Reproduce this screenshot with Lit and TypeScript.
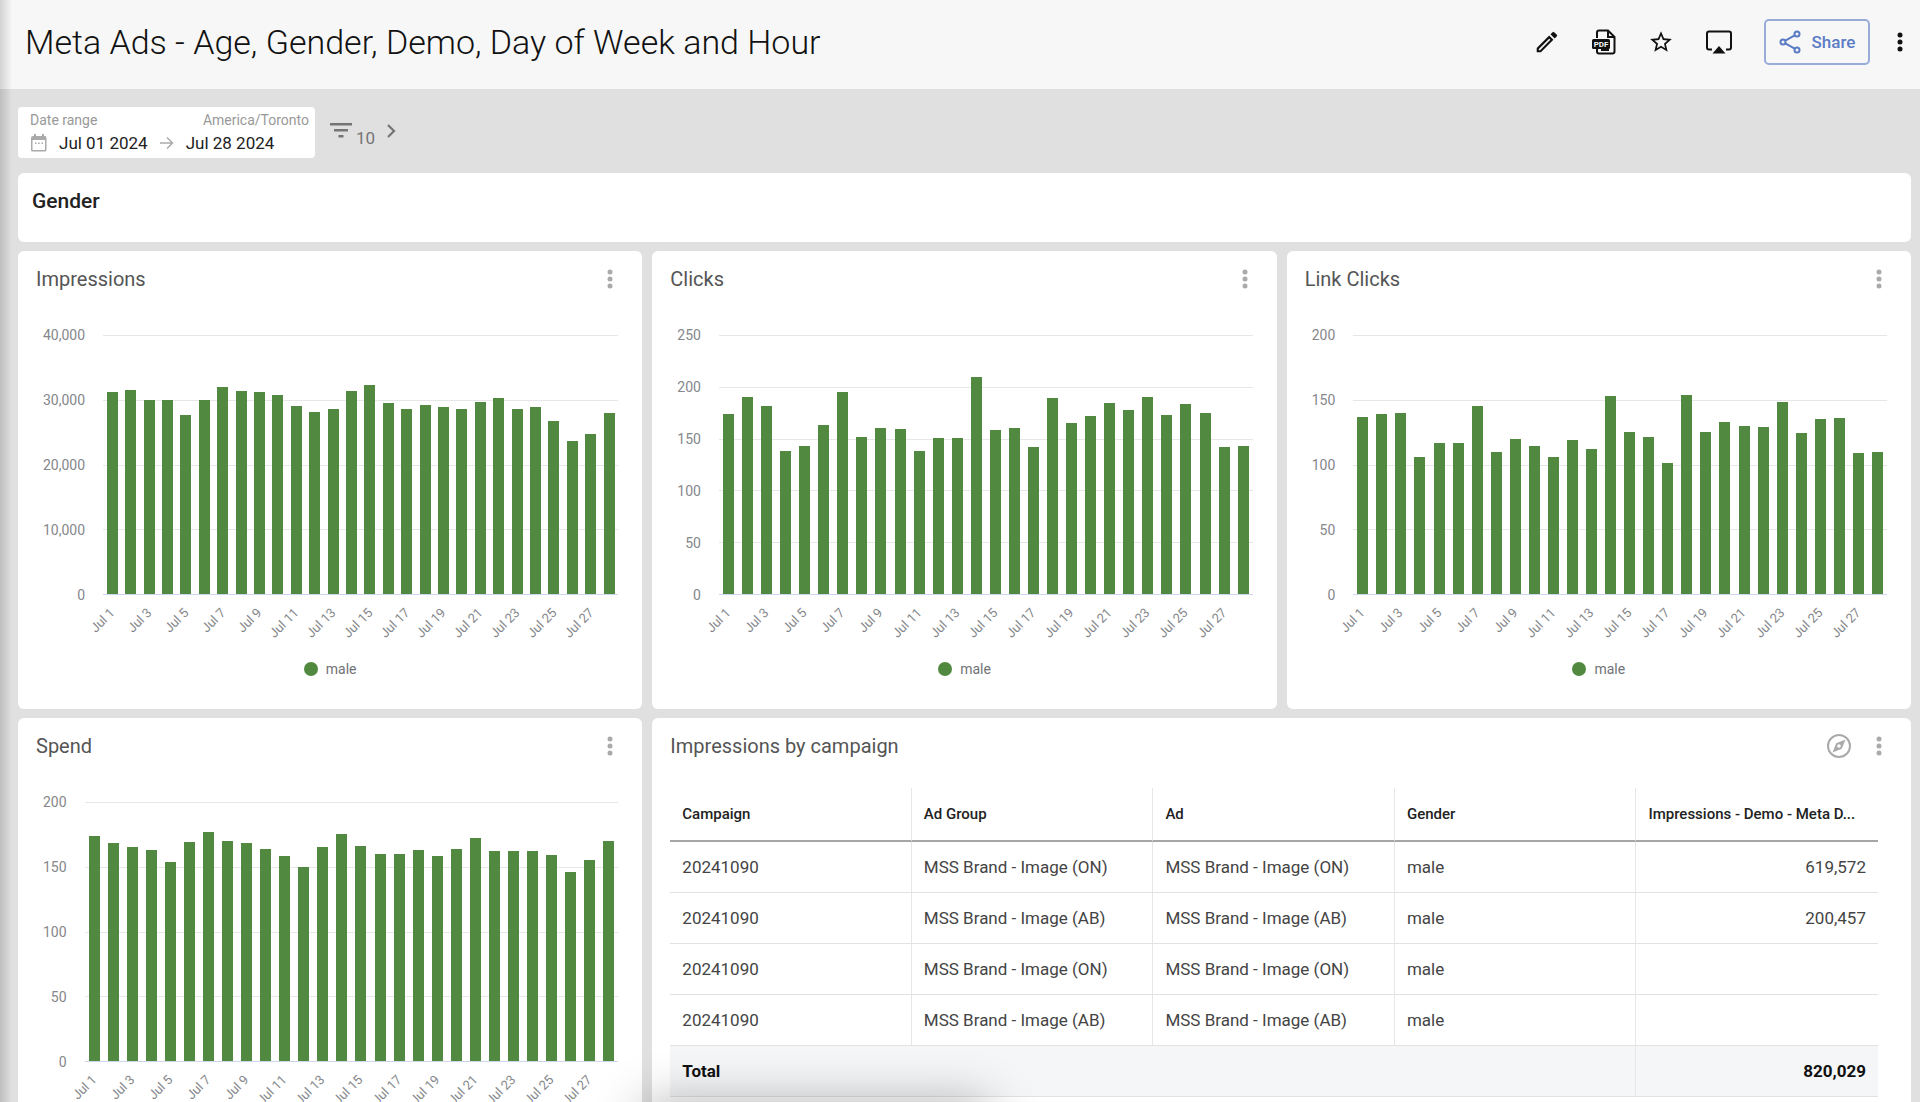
import { LitElement, html, css } from "lit";
import { customElement, property } from "lit/decorators.js";

const kebab = html`<svg class="kebab" viewBox="0 0 6 20" width="6" height="20" aria-hidden="true">
  <circle cx="3" cy="3" r="2.5" /><circle cx="3" cy="10" r="2.5" /><circle cx="3" cy="17" r="2.5" />
</svg>`;

interface Series {
  title: string;
  ticks: number[];
  values: number[];
}

const impressions: Series = {
  title: "Impressions",
  ticks: [40000, 30000, 20000, 10000, 0],
  values: [
    31170, 31520, 29890, 29890, 27720, 30040, 31950, 31330, 31170, 30810, 28960, 28080, 28600, 31330,
    32310, 29530, 28600, 29170, 28810, 28600, 29730, 30250, 28600, 28810, 26750, 23660, 24790, 27880,
  ],
};

const clicks: Series = {
  title: "Clicks",
  ticks: [250, 200, 150, 100, 50, 0],
  values: [
    174, 190, 181, 138, 143, 163, 195, 152, 160, 159, 138, 151, 151, 209,
    158, 160, 142, 189, 165, 172, 184, 178, 190, 173, 183, 175, 142, 143,
  ],
};

const linkClicks: Series = {
  title: "Link Clicks",
  ticks: [200, 150, 100, 50, 0],
  values: [
    137, 139, 140, 106, 117, 117, 145, 110, 120, 114, 106, 119, 112, 153,
    125, 121, 101, 154, 125, 133, 130, 129, 148, 124, 135, 136, 109, 110,
  ],
};

const spend: Series = {
  title: "Spend",
  ticks: [200, 150, 100, 50, 0],
  values: [
    174, 168, 165, 163, 154, 169, 177, 170, 168, 164, 158, 150, 165, 175,
    166, 160, 160, 163, 158, 164, 172, 162, 162, 162, 159, 146, 155, 170,
  ],
};

const campaigns = [
  ["20241090", "MSS Brand - Image (ON)", "MSS Brand - Image (ON)", "male", "619,572"],
  ["20241090", "MSS Brand - Image (AB)", "MSS Brand - Image (AB)", "male", "200,457"],
  ["20241090", "MSS Brand - Image (ON)", "MSS Brand - Image (ON)", "male", ""],
  ["20241090", "MSS Brand - Image (AB)", "MSS Brand - Image (AB)", "male", ""],
];

const base = css`
  * {
    box-sizing: border-box;
  }
  button {
    display: flex;
    align-items: center;
    justify-content: center;
    margin: 0;
    padding: 0;
    border: 0;
    background: none;
    color: inherit;
    font: inherit;
    cursor: pointer;
  }
  svg {
    display: block;
    fill: currentColor;
  }
`;

const cardStyles = css`
  :host {
    display: block;
    background: #fff;
    border-radius: 6px;
  }
  .head {
    display: flex;
    align-items: center;
    gap: 25px;
    height: 55px;
    padding: 0 29px 0 18px;
  }
  h2 {
    flex: 1;
    margin: 0;
    color: #555;
    font-size: 20px;
    font-weight: 400;
    line-height: 24px;
  }
  .head button {
    color: #aaa;
  }
`;

@customElement("bar-chart")
export class BarChart extends LitElement {
  @property({ attribute: false }) series!: Series;

  static styles = [
    base,
    cardStyles,
    css`
      :host {
        height: 458px;
      }
      .chart {
        display: grid;
        grid-template-columns: auto 1fr;
        column-gap: 18px;
        padding: 29px 24px 0 25px;
      }
      .axis {
        display: flex;
        flex-direction: column;
        justify-content: space-between;
        height: 260px;
        color: #85878b;
        font-size: 14px;
        text-align: right;
      }
      .axis span {
        display: flex;
        align-items: center;
        justify-content: flex-end;
        height: 0;
      }
      .plot {
        display: grid;
        height: 260px;
      }
      .lines,
      .bars {
        grid-area: 1 / 1;
      }
      .lines {
        display: flex;
        flex-direction: column;
        justify-content: space-between;
      }
      .lines i {
        height: 1px;
        background: #e6e6e6;
      }
      .lines i:last-child {
        background: #ccd6eb;
      }
      .bars,
      .days {
        display: grid;
        grid-template-columns: repeat(28, minmax(0, 1fr));
      }
      .bars {
        align-items: end;
        z-index: 1;
        padding-bottom: 1px;
      }
      .bars i {
        justify-self: center;
        width: 11px;
        background: #50893f;
      }
      .days {
        grid-column: 2;
        height: 65px;
        padding-top: 10px;
        color: #85878b;
        font-size: 13px;
        line-height: 16px;
      }
      .days span {
        display: flex;
        justify-content: flex-end;
        width: 4px;
        white-space: nowrap;
        transform: rotate(-45deg);
        transform-origin: top right;
      }
      .legend {
        display: flex;
        align-items: center;
        justify-content: center;
        gap: 8px;
        color: #707276;
        font-size: 14px;
        line-height: 18px;
      }
      .dot {
        width: 14px;
        height: 14px;
        border-radius: 50%;
        background: #50893f;
      }
    `,
  ];

  render() {
    const { title, ticks, values } = this.series;
    const max = ticks[0];
    return html`
      <div class="head">
        <h2>${title}</h2>
        <button aria-label="${title} options">${kebab}</button>
      </div>
      <div class="chart">
        <div class="axis">${ticks.map((t) => html`<span>${t.toLocaleString("en-US")}</span>`)}</div>
        <div class="plot">
          <div class="lines">${ticks.map(() => html`<i></i>`)}</div>
          <div class="bars">${values.map((v) => html`<i style="height:${(v / max) * 100}%"></i>`)}</div>
        </div>
        <div class="days">
          ${values.map((_, i) => html`<div>${i % 2 ? "" : html`<span>Jul ${i + 1}</span>`}</div>`)}
        </div>
      </div>
      <div class="legend"><span class="dot"></span>male</div>
    `;
  }
}

@customElement("campaign-table")
export class CampaignTable extends LitElement {
  static styles = [
    base,
    cardStyles,
    css`
      .wrap {
        padding: 15px 33px 0 18px;
      }
      table {
        width: 100%;
        table-layout: fixed;
        border-collapse: separate;
        border-spacing: 0;
      }
      th,
      td {
        height: 51px;
        padding: 0 12px;
        overflow: hidden;
        text-overflow: ellipsis;
        white-space: nowrap;
        text-align: left;
        border-bottom: 1px solid #e2e2e2;
        border-right: 1px solid #e6e6e6;
      }
      tr > :last-child {
        border-right: 0;
      }
      thead th {
        height: 54px;
        color: #222;
        font-size: 15px;
        font-weight: 500;
        border-bottom: 2px solid #a6a6a6;
      }
      td {
        color: #444;
        font-size: 17px;
      }
      tbody td:last-child,
      tfoot td {
        text-align: right;
      }
      tfoot th,
      tfoot td {
        color: #111;
        font-size: 17px;
        font-weight: 700;
        background: #f5f6f8;
      }
    `,
  ];

  render() {
    return html`
      <div class="head">
        <h2>Impressions by campaign</h2>
        <button aria-label="Explore">
          <svg width="24" height="24" viewBox="0 0 24 24">
            <circle cx="12" cy="12" r="11" fill="none" stroke="currentColor" stroke-width="2" />
            <path fill-rule="evenodd" d="M18.500 5.500 14.800 14.800 5.500 18.500 9.200 9.200ZM12 10.200a1.800 1.800 0 1 0 0 3.600a1.800 1.800 0 0 0 0-3.600Z" />
          </svg>
        </button>
        <button aria-label="Table options">${kebab}</button>
      </div>
      <div class="wrap">
        <table>
          <thead>
            <tr>
              <th scope="col">Campaign</th>
              <th scope="col">Ad Group</th>
              <th scope="col">Ad</th>
              <th scope="col">Gender</th>
              <th scope="col">Impressions - Demo - Meta D...</th>
            </tr>
          </thead>
          <tbody>
            ${campaigns.map((row) => html`<tr>${row.map((cell) => html`<td>${cell}</td>`)}</tr>`)}
          </tbody>
          <tfoot>
            <tr>
              <th scope="row" colspan="4">Total</th>
              <td>820,029</td>
            </tr>
          </tfoot>
        </table>
      </div>
    `;
  }
}

@customElement("app-root")
export class AppRoot extends LitElement {
  static styles = [
    base,
    css`
      :host {
        display: block;
        position: relative;
        height: 100vh;
        overflow: hidden;
        background: #e0e0e0;
        color: #222;
        font-family: Roboto, "Noto Sans", sans-serif;
      }
      .edge {
        position: absolute;
        inset: 0 auto 0 0;
        width: 12px;
        background: linear-gradient(to right, rgba(0, 0, 0, 0.15), rgba(0, 0, 0, 0));
        pointer-events: none;
      }
      .glow {
        position: absolute;
        left: 34%;
        right: 49%;
        bottom: -40px;
        height: 30px;
        box-shadow: 0 0 50px 10px rgba(0, 0, 0, 0.3);
        pointer-events: none;
      }
      header {
        display: flex;
        align-items: center;
        height: 89px;
        padding: 0 17px 5px 25px;
        background: #f7f7f7;
      }
      h1 {
        flex: 1;
        margin: 0;
        font-size: 34px;
        font-weight: 300;
        line-height: 40px;
        color: #111;
      }
      .bar,
      .tools {
        display: flex;
        align-items: center;
        color: #111;
      }
      .bar {
        gap: 27px;
      }
      .tools {
        gap: 31px;
      }
      .tools .share {
        gap: 11px;
        width: 106px;
        height: 46px;
        border: 2px solid #98acd9;
        border-radius: 5px;
        color: #5b7cc5;
        font-size: 17px;
        font-weight: 500;
      }
      .filters {
        display: flex;
        align-items: center;
        gap: 15px;
        padding: 18px 18px 15px;
      }
      .range {
        display: grid;
        gap: 2px;
        width: 297px;
        height: 51px;
        padding: 4px 6px 4px 12px;
        border-radius: 4px;
        background: #fff;
      }
      .labels {
        display: flex;
        justify-content: space-between;
        color: #999;
        font-size: 14px;
        line-height: 18px;
      }
      .dates {
        display: flex;
        align-items: center;
        gap: 12px;
        font-size: 17px;
        line-height: 20px;
      }
      .muted {
        color: #aaa;
      }
      .more {
        gap: 4px;
        padding-bottom: 4px;
        color: #757575;
        font-size: 17px;
      }
      .more .count {
        padding-top: 14px;
        line-height: 20px;
      }
      .more .next {
        margin-left: 8px;
      }
      main {
        display: grid;
        grid-template-columns: repeat(3, minmax(0, 1fr));
        gap: 9px 10px;
        padding: 0 9px 0 18px;
      }
      .section {
        grid-column: 1 / -1;
        height: 69px;
        padding: 16px 14px;
        border-radius: 6px;
        background: #fff;
      }
      .section h2 {
        margin: 0;
        font-size: 21px;
        font-weight: 500;
        line-height: 24px;
      }
      campaign-table {
        grid-column: span 2;
      }
    `,
  ];

  render() {
    return html`
      <header>
        <h1>Meta Ads - Age, Gender, Demo, Day of Week and Hour</h1>
        <div class="bar">
          <div class="tools">
            <button aria-label="Edit">
              <svg width="26" height="26" viewBox="0 0 24 24">
                <path d="M2.500 17.600V21.500H6.400L17.900 10 14 6.100ZM5.600 19.500H4.500V18.400L14 8.900 15.100 10ZM21.100 6.800a1 1 0 0 0 0-1.400L18.600 2.900a1 1 0 0 0-1.400 0L15.200 4.900 19.100 8.800Z" />
              </svg>
            </button>
            <button aria-label="Download PDF">
              <svg width="26" height="26" viewBox="0 0 26 26">
                <path d="M6 9V3.500Q6 1.500 8 1.500H17L23.500 8V22.500Q23.500 24.500 21.500 24.500H8Q6 24.500 6 22.500V19M17 2V8H23M18 21H10" fill="none" stroke="currentColor" stroke-width="2" />
                <rect x="1" y="10" width="18" height="10" rx="1.500" />
                <text x="10" y="18" font-size="8" font-weight="700" text-anchor="middle" fill="#f7f7f7">PDF</text>
              </svg>
            </button>
            <button aria-label="Favourite">
              <svg width="26" height="26" viewBox="0 0 24 24">
                <path d="M22 9.240 14.810 8.620 12 2 9.190 8.630 2 9.240 7.460 13.970 5.820 21 12 17.270 18.180 21 16.550 13.970ZM12 15.400 8.240 17.670 9.240 13.390 5.920 10.510 10.300 10.130 12 6.100 13.710 10.140 18.090 10.520 14.770 13.400 15.770 17.680Z" />
              </svg>
            </button>
            <button aria-label="Present">
              <svg width="28" height="26" viewBox="0 0 28 26">
                <path d="M7 20.500H4Q2 20.500 2 18.500V4.500Q2 2.500 4 2.500H24Q26 2.500 26 4.500V18.500Q26 20.500 24 20.500H21" fill="none" stroke="currentColor" stroke-width="2" />
                <path d="M14 17 20.500 24.500H7.500Z" />
              </svg>
            </button>
            <button class="share">
              <svg width="22" height="24" viewBox="0 0 22 24">
                <g fill="none" stroke="currentColor" stroke-width="2">
                  <circle cx="4" cy="12" r="2.500" /><circle cx="18" cy="4" r="2.500" /><circle cx="18" cy="20" r="2.500" />
                  <path d="M6.300 10.700 15.700 5.300M6.300 13.300 15.700 18.700" />
                </g>
              </svg>
              Share
            </button>
          </div>
          <button aria-label="More">${kebab}</button>
        </div>
      </header>
      <div class="filters">
        <div class="range">
          <div class="labels"><span>Date range</span><span>America/Toronto</span></div>
          <div class="dates">
            <svg class="muted" width="17" height="18" viewBox="-1 0 17 18">
              <path fill-rule="evenodd" d="M3 0H5V2H11V0H13V2H14Q15.500 2 15.500 4V16Q15.500 17.500 14 17.500H2Q0 17.500 0 16V4Q0 2 2 2H3ZM1.500 6V16H14V6Z" />
              <path d="M4 8.500h1.500v1.500H4zM7.200 8.500h1.500v1.500H7.200zM10.500 8.500H12v1.500h-1.500z" />
            </svg>
            <span>Jul 01 2024</span>
            <svg class="muted" width="14" height="14" viewBox="0 0 14 14">
              <path d="M0 7H12.500M7 1.500 12.500 7 7 12.500" fill="none" stroke="currentColor" stroke-width="1.500" />
            </svg>
            <span>Jul 28 2024</span>
          </div>
        </div>
        <button class="more" aria-label="10 more filters">
          <svg width="22" height="15" viewBox="0 0 22 15"><path d="M0 0H22V2.500H0ZM4 6H18V8.500H4ZM8.500 12H13.500V14.500H8.500Z" /></svg>
          <span class="count">10</span>
          <svg class="next" width="9" height="14" viewBox="0 0 9 14">
            <path d="M1 1 7 7 1 13" fill="none" stroke="currentColor" stroke-width="2.200" />
          </svg>
        </button>
      </div>
      <main>
        <section class="section"><h2>Gender</h2></section>
        <bar-chart .series=${impressions}></bar-chart>
        <bar-chart .series=${clicks}></bar-chart>
        <bar-chart .series=${linkClicks}></bar-chart>
        <bar-chart .series=${spend}></bar-chart>
        <campaign-table></campaign-table>
      </main>
      <div class="edge"></div>
      <div class="glow"></div>
    `;
  }
}
